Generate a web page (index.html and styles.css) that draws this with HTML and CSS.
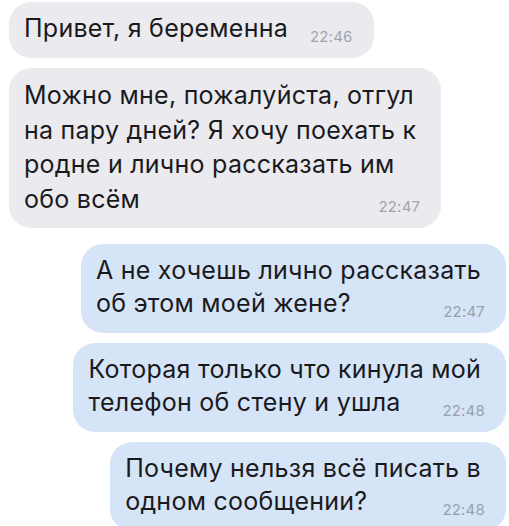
FILE: index.html
```html
<!DOCTYPE html>
<html lang="ru">
	<head>
		<meta charset="UTF-8" />
		<meta name="viewport" content="width=device-width, initial-scale=1.0" />
		<title>Чат</title>
		<link rel="stylesheet" href="styles.css">
	</head>
	<body>
		<div class="chat">
			<!-- Incoming -->
			<div class="bubble in">
				Привет, я беременна<span class="time">22:46</span>
			</div>
			<div class="bubble in long">
				Можно мне, пожалуйста, отгул<br>
				на пару дней? Я хочу поехать к<br>
				родне и лично рассказать им<br>
				обо всём<span class="time">22:47</span>
			</div>

			<!-- Outgoing -->
			<div class="bubble out group-start">
				А не хочешь лично рассказать<br>
				об этом моей жене?<span class="time">22:47</span>
			</div>
			<div class="bubble out">
				Которая только что кинула мой<br>
				телефон об стену и ушла<span class="time">22:48</span>
			</div>
			<div class="bubble out">
				Почему нельзя всё писать в<br>
				одном сообщении?<span class="time">22:48</span>
			</div>
		</div>
	</body>
</html>
```

FILE: styles.css
```css
/* Base styles */
body {
	margin: 0px;
	padding: 0px;
	background: #fff;
	font-family: Inter, "Liberation Sans", Arial, sans-serif;
	color: #1a1a1d;
}
/* Message list */
.chat {
	display: flex;
	flex-direction: column;
	gap: 10px;
	padding: 2px 3px 0px 9px;
}
/* Bubbles */
.bubble {
	border-radius: 22px;
	padding: 10px 25px 11px 15px;
	font-size: 25px;
	line-height: 33px;
	letter-spacing: 0.25px;
}
.bubble.long {
	line-height: 34.5px;
}
.in {
	align-self: flex-start;
	background: #eaeaef;
}
.out {
	align-self: flex-end;
	background: #d5e4f7;
}
.group-start {
	margin-top: 6px;
}
/* Timestamp sits at the right of the last line, a little below its baseline */
.time {
	float: right;
	margin: 15px -4px 0px 22px;
	font-size: 15px;
	line-height: 20px;
	letter-spacing: 0.2px;
	color: #a3a5ac;
}
.out .time {
	color: #97a1ae;
}
```
